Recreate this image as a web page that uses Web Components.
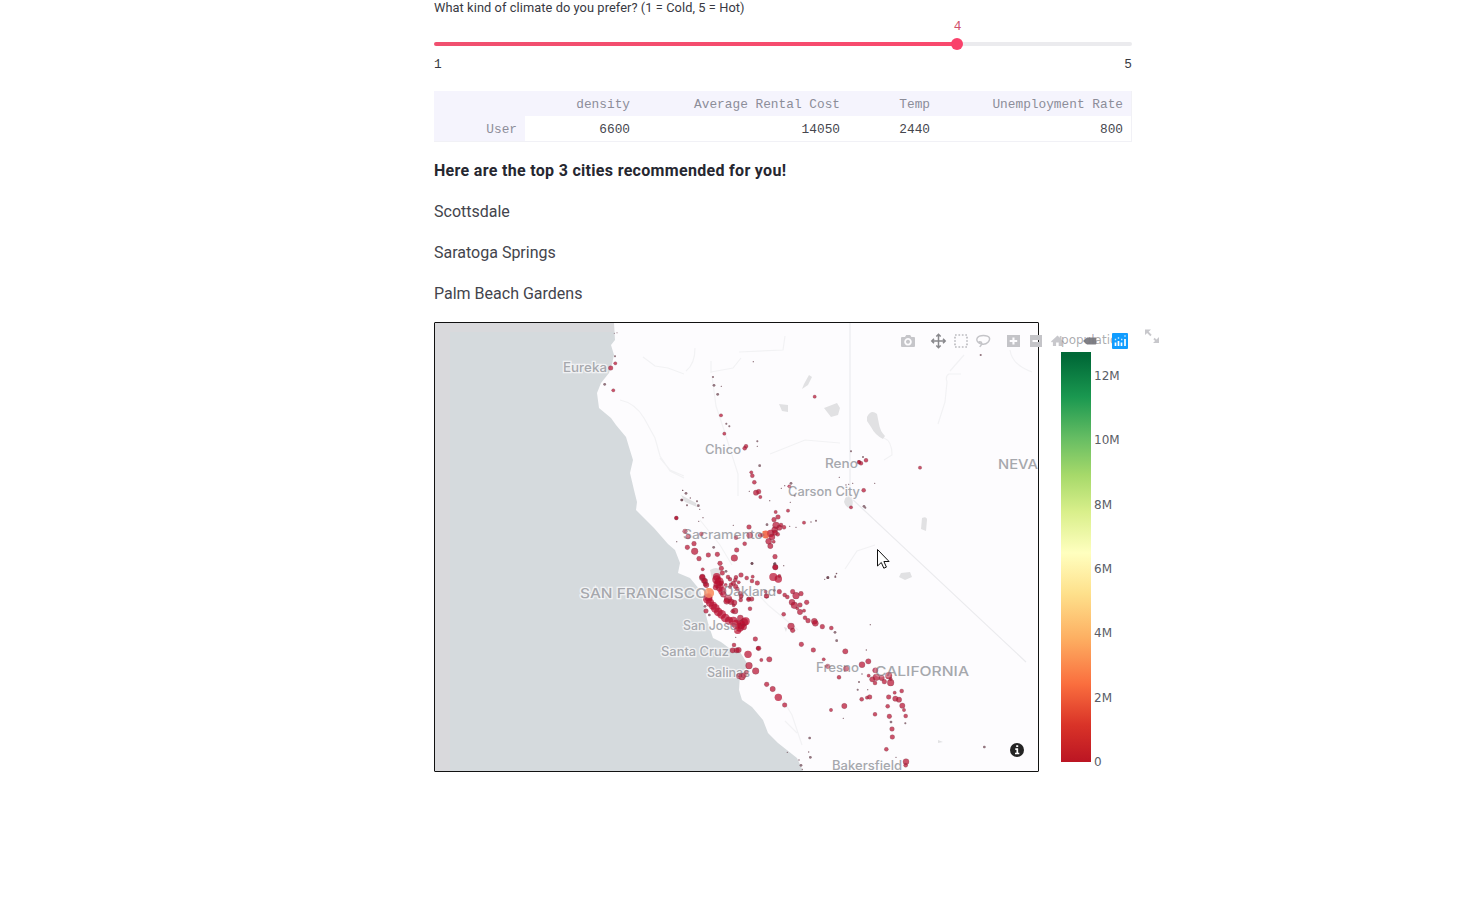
<!DOCTYPE html>
<html lang="en">
<head>
<meta charset="utf-8">
<title>City recommender</title>
<style>
html,body{margin:0;height:100%;overflow:hidden;background:#fff}
body{font-family:Roboto,"Noto Sans",sans-serif;color:#262730}
</style>
</head>
<body>
<recommender-page></recommender-page>
<script>
const define = (name, html, setup) => customElements.define(name, class extends HTMLElement {
  constructor() {
    super();
    const t = document.createElement('template');
    t.innerHTML = html;
    this.attachShadow({mode: 'open'}).append(t.content.cloneNode(true));
    if (setup) setup(this.shadowRoot, this);
  }
});

define('range-slider', `
<style>
:host{display:block;height:91px}
.label{height:17px;line-height:15px;font-size:12.8px;letter-spacing:.08px;white-space:nowrap;color:#383942}
.value{height:25px;width:16px;margin-left:515.5px;text-align:center;font:12.8px/19px "Liberation Mono",monospace;color:#d0506c}
.track{height:4px;border-radius:2px;background:linear-gradient(90deg,#f0506f 0,#f9496d 523px,#ebebee 523px);display:flex;align-items:center}
.thumb{width:12px;height:12px;flex:none;border-radius:50%;background:#f9426b;margin-left:517px}
.ends{display:flex;justify-content:space-between;font:12.8px/18px "Liberation Mono",monospace;padding-top:10px;color:#383942}
</style>
<div class="label"><slot></slot></div>
<div class="value">4</div>
<div class="track"><div class="thumb"></div></div>
<div class="ends"><span>1</span><span>5</span></div>`);

define('data-table', `
<style>
:host{display:grid;grid-template-columns:91px 113px 210px 90px 193px;grid-template-rows:25px 25px;box-sizing:border-box;width:698px;height:51px;
 border-right:1px solid #f1f1f6;border-bottom:1px solid #f1f1f6;font:12.8px/27px "Liberation Mono",monospace}
div{text-align:right;padding-right:8px;white-space:nowrap}
.h{background:#f5f4fd;color:#8c8d99}
.n{color:#45464e}
</style>
<div class="h"></div><div class="h">density</div><div class="h">Average Rental Cost</div><div class="h">Temp</div><div class="h">Unemployment Rate</div>
<div class="h">User</div><div class="n">6600</div><div class="n">14050</div><div class="n">2440</div><div class="n">800</div>`);

define('text-line', `
<style>
:host{display:block;height:26px;line-height:26px;margin-bottom:15px;font-size:16px;white-space:nowrap;color:#43444c}
:host([strong]){font-weight:700;color:#262730;letter-spacing:.31px}
</style><slot></slot>`);

define('color-scale', `
<style>
:host{display:flex;font:12px/16px "DejaVu Sans",sans-serif;color:#5a5d66}
.bar{width:30px;height:410px;background:linear-gradient(0deg,#bb1523 0%,#d93328 9%,#fa6e3e 19%,#fdae61 30%,#fee08b 41%,#ffffbf 51%,#d9ef8b 61%,#a6d96a 70%,#66bd63 79%,#1a9850 89%,#006837 99%)}
.ticks{display:flex;flex-direction:column;justify-content:space-between;height:402px;margin:16px 0 0 3px}
</style>
<div class="bar"></div>
<div class="ticks"><span>12M</span><span>10M</span><span>8M</span><span>6M</span><span>4M</span><span>2M</span><span>0</span></div>`);

define('mode-bar', `
<style>
:host{display:block}
svg{display:block;overflow:visible}
</style>
<svg width="270" height="30" viewBox="895 326 270 30">
 <g fill="#c6c6ca">
  <path fill-rule="evenodd" d="M902 337h3l1.2-2h4l1.2 2h2.6q1 0 1 1v8q0 1-1 1h-12q-1 0-1-1v-8q0-1 1-1zM908 338a3.8 3.8 0 1 0 .01 0zM908 339.7a2 2 0 1 1-.01 0z"/>
 </g>
 <path d="M932 341h13M938.500 334.500v13M936.300 336.500l2.200-2.200 2.200 2.200M936.300 345.500l2.200 2.200 2.200-2.200M934 338.800l-2.200 2.200 2.200 2.200M943 338.800l2.200 2.200-2.200 2.200" fill="none" stroke="#88888c" stroke-width="1.5"/>
 <rect x="955" y="335" width="12" height="12" fill="none" stroke="#bcbcc0" stroke-width="1.7" stroke-dasharray="1.7 1.73"/>
 <path d="M979.500 343.500C974.500 340 977 335.500 983.500 335.500S991 339 988 342.200 980.500 344.200 979 342.800 981.600 341.200 981.800 343.200 980.600 345.600 979.800 347" fill="none" stroke="#c4c4c8" stroke-width="1.400"/>
 <path fill="#c4c4c8" fill-rule="evenodd" d="M1007 335h13v12h-13zM1012.400 337.500v2.500h-2.700v2h2.700v2.500h2.100v-2.500h2.700v-2h-2.700v-2.500z"/>
 <path fill="#c4c4c8" fill-rule="evenodd" d="M1030 335h12v12h-12zM1032.500 340v2h7v-2z"/>
 <path fill="#c8c8cc" d="M1051 341.500l6.500-6 2.300 2.200v-1.800h1.700v3.500l2.400 2.200-1 .9-.9-.8v4.300h-3.300v-3.500h-2.600v3.500h-3.200v-4.200l-.9.800z"/>
 <path fill="#808086" d="M1083 341l4-3.500h8.500q.8 0 .8.800v5.400q0 .8-.8.8h-8.500z"/>
 <text x="1061" y="344" font-family="DejaVu Sans" font-size="12" fill="#77777d" fill-opacity=".62" textLength="64">population</text>
 <rect x="1112" y="333" width="16" height="16" rx="1" fill="#119dff"/>
 <path d="M1115.500 346v-3.500M1118.500 346v-5M1121.500 346v-3.500M1125 346v-7" stroke="#fff" stroke-width="1.700"/>
 <path d="M1114.800 339.500h1.400M1117.800 338h1.400M1121 339.500h1.400M1124.300 336h1.400" stroke="#fff" stroke-opacity=".8" stroke-width="1.300"/>
 <g stroke="#c8c8cc" fill="#c8c8cc" stroke-width="1.800"><path d="M1151 335.500l-4-4M1154 338.500l3 3" /><path stroke="none" d="M1145 329.500h6l-6 5.500zM1159 343v-6l-6 6z"/></g>
</svg>`);

/* Town markers by map tile: tile origin, then x, y, radius in thirds of a pixel. */
const TILES = [
 [434,320,[[543,109,3],[544,130,5],[530,144,7],[512,193,4],[538,211,5],[549,38,1.5],[541,40,1.5],[727,594,5],[743,540,4],[746,511,2]]],
 [660,320,[[159,171,3],[162,196,4],[173,223,4],[183,286,5],[199,311,3],[208,319,3],[193,341,5],[280,125,2],[464,230,5],[258,379,6],[254,385,6],[292,364,3],[292,379,2],[184,199,2],[299,437,4],[274,457,5],[277,467,6],[283,487,6],[288,518,8],[296,515,7],[301,531,5],[268,514,2],[573,394,3],[597,427,6],[388,499,5],[393,490,4],[374,497,2],[364,505,2],[404,527,3],[391,547,2],[329,542,2],[566,493,2],[558,495,2],[538,472,2],[573,562,5]]],
 [850,320,[[48,421,6],[33,430,6],[27,426,5],[39,411,3],[210,443,5],[41,511,6],[42,559,4],[46,563,3],[392,105,3],[74,490,2],[8,490,2]]],
 [660,480,[[78,40,4],[66,60,4],[81,76,3],[111,64,3],[115,77,4],[68,31,2],[91,54,2],[119,88,2],[49,114,6],[129,113,2],[116,124,2],[75,154,7],[84,170,7],[124,162,6],[102,191,7],[82,202,7],[104,214,10],[117,236,7],[145,225,7],[172,223,7],[161,202,4],[228,173,6],[254,191,6],[230,210,7],[223,234,10],[267,141,7],[269,166,9],[220,136,2],[276,250,4],[180,250,7],[184,265,7],[128,268,5],[347,96,5],[354,111,7],[342,119,7],[384,92,5],[348,136,10],[358,143,8],[363,135,6],[372,142,6],[321,134,4],[432,128,5],[453,126,2],[468,122,3],[389,139,2],[408,142,2],[344,149,9],[332,160,11],[336,171,9],[326,184,9],[331,198,8],[300,166,6],[307,165,5],[345,158,8],[353,163,6],[341,185,5],[345,230,7],[346,262,8],[345,251,4],[50,185,2],[340,291,12],[355,297,11],[358,288,5],[503,293,4],[526,291,3],[529,281,2],[371,257,2],[243,285,7],[228,292,6],[260,294,6],[276,303,6],[292,309,7],[278,290,5],[127,293,9],[135,303,8],[136,312,7],[204,291,6],[210,298,6],[220,310,7],[226,300,6],[213,314,6],[227,320,7],[236,307,5],[187,279,7],[198,274,4],[184,309,7],[197,315,5],[210,321,5],[317,335,5],[320,348,7],[266,356,5],[243,350,6],[241,340,6],[232,327,6]]],
 [660,480,[[170,290,11],[170,299,13],[178,305,13],[173,313,12],[180,323,12],[187,333,12],[167,322,8],[190,343,9],[145,352,12]]],
 [570,560,[[397,50,8],[402,62,8],[409,75,8],[413,117,14],[420,128,12],[429,137,12],[436,145,13],[445,156,13],[455,163,13],[466,174,13],[477,182,12],[490,184,14],[499,193,14],[509,202,13],[503,211,11],[513,194,13],[522,187,12],[527,184,12],[521,201,9],[511,174,9],[474,117,12],[470,124,9],[483,125,9],[493,128,8],[495,153,9],[488,154,6],[491,136,5],[540,146,6],[556,237,7],[534,283,11],[492,255,6],[488,271,8],[500,271,8],[506,270,8],[564,265,6],[537,317,10],[557,333,10],[507,348,8],[516,350,10],[521,346,8],[529,337,6],[405,139,4],[408,153,7],[418,165,4],[497,232,2],[545,117,7],[514,107,6],[512,120,6]]],
 [740,560,[[36,11,4],[106,21,8],[103,12,4],[26,118,7],[79,108,7],[103,91,4],[118,95,7],[134,105,6],[142,111,6],[158,95,7],[168,107,10],[183,101,7],[156,127,9],[163,136,10],[180,135,7],[200,127,7],[172,145,5],[180,156,8],[192,152,5],[131,163,6],[195,173,6],[204,182,7],[223,184,9],[226,190,9],[247,200,7],[274,204,6],[285,217,4],[290,242,4],[153,199,10],[158,211,7],[184,253,7],[220,270,7],[316,274,8],[391,194,2],[251,298,5],[290,40,2],[286,48,2],[264,53,4],[254,58,2]]],
 [720,640,[[116,25,7],[148,58,8],[124,60,5],[140,133,7],[158,147,8],[175,172,11],[194,195,7],[445,64,8],[426,74,9],[323,79,7],[378,86,8],[357,112,6],[466,91,8],[446,107,5],[469,112,10],[457,118,8],[465,129,6],[485,114,8],[506,107,10],[493,125,7],[512,128,10],[512,117,5],[417,126,3],[413,149,3],[443,149,2],[425,178,6],[441,173,5],[449,171,7],[506,171,7],[524,158,5],[545,153,6],[526,176,8],[537,179,8],[547,197,8],[552,210,5],[557,228,6],[503,199,6],[508,229,7],[556,250,3],[465,223,6],[373,198,8],[333,210,5],[370,235,2],[513,246,4],[516,267,7],[517,291,7],[499,328,6],[269,294,4],[266,336,2],[271,352,4],[202,337,2],[237,360,2],[243,376,4],[247,388,2],[793,321,4],[558,365,9],[557,376,6],[439,30,2],[426,102,2],[528,352,2]]]
];

/* text, x, centre y, width, size */
const PLACES = [['Eureka',563,367.5,44,12.5],['Chico',705,449,36,12.5],['Reno',825,463,33,12.5],['Carson City',788,491,72,12.5],['Sacramento',683,534,80,12.5],['Oakland',723,591,53,12.5],['San Jose',683,625,54,12.5],['Santa Cruz',661,651,68,12.5],['Salinas',707,672.5,43,12.5],['Fresno',816,667,43,12.5],['Bakersfield',832,765,70,12.5],['SAN FRANCISCO',580,593,127,13.5],['CALIFORNIA',875,671,94,13.5],['NEVA',998,464,40,13.5]];

define('city-map', `
<style>
:host{display:block;box-sizing:border-box;width:605px;height:450px;border:1px solid #111;border-radius:1px}
svg{display:block}
text{font-family:Inter,sans-serif;font-weight:500;fill:#a6a8ad;stroke:#fdfcfe;stroke-opacity:.7;stroke-width:2.5;paint-order:stroke}
.town{stroke:#6d4450;stroke-opacity:.35;stroke-width:.7}
</style>
<svg width="603" height="448" viewBox="435 323 603 448">
 <rect x="435" y="323" width="603" height="448" fill="#fdfcfe"/>
 <path fill="#d5dadd" d="M435 323H614L615 340 611 345 614 355 612 364 609 373 601 383 597 393 599 408 611 418 616 425 626 437 629 447 633 460 630 473 634 490 637 502 636 510 654 528 668 544 675 550 680 563 678 573 690 578 700 590 703 603 708 623 713 638 721 642 729 648 740 652 747 663 747 668 740 674 739 690 742 700 752 707 763 720 768 733 778 743 797 758 803 771H435z"/>
 <path d="M435 323h179v9H450v439h-15z" fill="#dbd9dc" opacity=".65"/>
 <g fill="#e1e1e3">
  <path d="M867 417q4-8 10-3l2 10q1 7 6 12l-2 3q-8-4-12-12l-4-6zM824 408l13-5 3 5-2 7-7 2zM804 384l5-9 3 2-4 8-6 4zM779 404l9 1v7l-6-1zM922 518q5-2 5 2l-1 11-5-2zM844 502q2-9 7-6 3 5 1 11-5 3-8-5zM901 573l9-1 2 5-7 3-6-3zM681 495l15 8 1 4-12-5zM710 570q7-4 10 0l1 6-9 3zM938 740l5 2-5 1zM784 627l3 1-1 4z"/>
 </g>
 <g fill="none" stroke="#f2f2f4" stroke-width="1.200">
  <path d="M850 323V497L1026 662" stroke="#ebebee"/>
  <path d="M643 357l12 9 13 2 16 6M620 400q15 3 24 18l11 20 5 18 10 15 14 7M660 458l10 12 14 6M695 348q0 16-9 23M711 373v-12M711 372l22-4 8-10M739 352l44-2 2-14M712 376l4 30 8 24 14 44v22M770 454l35-14 35 3M1010 350q2 15 22 22M964 355l-14 16M961 374h-12q-4 2-2 8l-2 20-7 22M884 438q8 3 8 17l-8 5M754 590l14 15 30 25M780 695l12 20 10 30M875 545l-18 6-12 18M700 520l20 25 12 20M785 721l12 12"/>
 </g>
 <g id="dots" fill="#b80f30" fill-opacity=".5"></g>
 <circle cx="765.500" cy="534.500" r="4" fill="#f27256"/>
 <circle cx="709" cy="593" r="5" fill="#fa9a70"/>
 <g id="names"></g>
 <g id="over" fill="#b80f30" fill-opacity=".42"></g>
 <circle cx="709" cy="593" r="5" fill="#fa9a70" fill-opacity=".7"/>
 <circle cx="1017" cy="750" r="7" fill="#242424"/><path d="M1017.300 748.500v5M1015.300 749.200h2.800M1015 753.500h4.300M1016.200 746.200h2" fill="none" stroke="#fff" stroke-width="1.700"/>
 <path d="M877.500 549.500v16.500l3.800-3.500 2.500 5.700 2.600-1.100-2.500-5.600h5.200z" fill="#fff" stroke="#111"/>
</svg>`, root => {
  const NS = 'http://www.w3.org/2000/svg';
  for (const id of ['dots', 'over']) {
    const g = root.getElementById(id);
    for (const [ox, oy, pts] of TILES) for (const [x, y, r] of pts) {
      const c = document.createElementNS(NS, 'circle');
      c.setAttribute('cx', ox + x / 3); c.setAttribute('cy', oy + y / 3); c.setAttribute('r', r / 3);
      if (r < 4.5) c.setAttribute('fill', '#68404c');
      else if (id === 'over' && r < 11) c.setAttribute('class', 'town');
      g.append(c);
    }
  }
  for (const [s, x, y, w, size] of PLACES) {
    const t = document.createElementNS(NS, 'text');
    t.textContent = s;
    t.setAttribute('x', x); t.setAttribute('y', y + size * .36); t.setAttribute('font-size', size);
    t.setAttribute('textLength', w); t.setAttribute('lengthAdjust', 'spacingAndGlyphs');
    root.getElementById('names').append(t);
  }
});

define('map-chart', `
<style>
:host{display:flex;position:relative;width:730px;height:450px}
color-scale{margin:30px 0 0 22px}
mode-bar{position:absolute;left:461px;top:4px}
</style>
<city-map></city-map><color-scale></color-scale><mode-bar></mode-bar>`);

define('recommender-page', `
<style>
:host{display:block;width:698px;margin-left:434px}
data-table{margin-bottom:16px}
</style>
<range-slider>What kind of climate do you prefer? (1 = Cold, 5 = Hot)</range-slider>
<data-table></data-table>
<text-line strong>Here are the top 3 cities recommended for you!</text-line>
<text-line>Scottsdale</text-line>
<text-line>Saratoga Springs</text-line>
<text-line>Palm Beach Gardens</text-line>
<map-chart></map-chart>`);
</script>
</body>
</html>
